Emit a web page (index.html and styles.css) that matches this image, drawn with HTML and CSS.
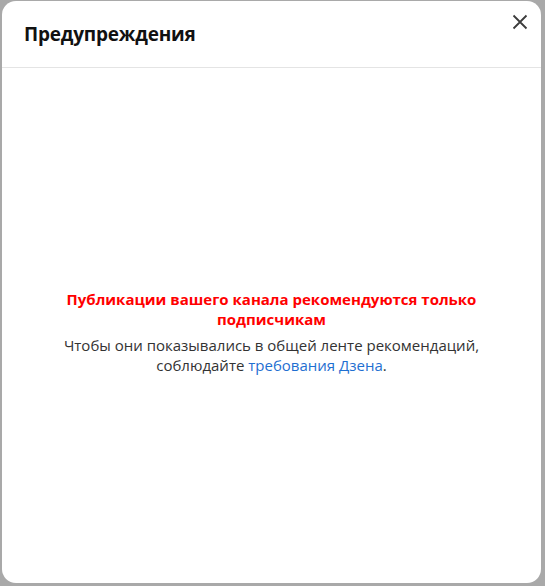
FILE: index.html
```html
<!DOCTYPE html>
<html lang="ru">
<head>
    <meta charset="UTF-8">
    <meta name="viewport" content="width=device-width, initial-scale=1.0">
    <title>Предупреждения</title>
    <link rel="stylesheet" href="styles.css">
</head>
<body>
    <div class="backdrop">
        <div class="modal">
            <div class="modal-header">
                <h2 class="modal-title">Предупреждения</h2>
                <button class="modal-close" aria-label="Закрыть">
                    <svg width="16" height="16" viewBox="0 0 16 16"><path d="M1.5 1.5l13 13M14.5 1.5l-13 13" stroke="#3c3c3c" stroke-width="1.8" fill="none"/></svg>
                </button>
            </div>
            <div class="modal-body">
                <div class="notice">
                    <p class="notice-title">Публикации вашего канала рекомендуются только подписчикам</p>
                    <p class="notice-text">Чтобы они показывались в общей ленте рекомендаций, соблюдайте <a href="#">требования Дзена</a>.</p>
                </div>
            </div>
        </div>
    </div>
</body>
</html>
```

FILE: styles.css
```css
body { margin: 0; padding: 0; font-family: "Open Sans", "Noto Sans", Arial, sans-serif; background-color: #a9a9a9; }
.backdrop { height: 586px; padding: 1px 4px 3px 2px; box-sizing: border-box; display: flex; }
.modal { flex: 1; background: #fff; border-radius: 14px; display: flex; flex-direction: column; overflow: hidden; }
.modal-header { position: relative; height: 66px; border-bottom: 1px solid #e4e4e4; display: flex; align-items: center; padding: 0 22px; }
.modal-title { margin: 0; font-size: 19px; font-weight: 700; color: #111; letter-spacing: -0.2px; }
.modal-close { position: absolute; top: 11px; right: 11px; width: 20px; height: 20px; padding: 0; border: 0; background: none; cursor: pointer; display: flex; align-items: center; justify-content: center; }
.modal-body { flex: 1; display: flex; align-items: center; justify-content: center; padding: 12px 36px 0; }
.notice { text-align: center; font-size: 15px; line-height: 20px; }
.notice p { margin: 0; }
.notice .notice-title { color: #f00; font-weight: 700; margin-bottom: 6px; }
.notice-text { color: #333; }
.notice-text a { color: #1f6fd1; text-decoration: none; }
```
